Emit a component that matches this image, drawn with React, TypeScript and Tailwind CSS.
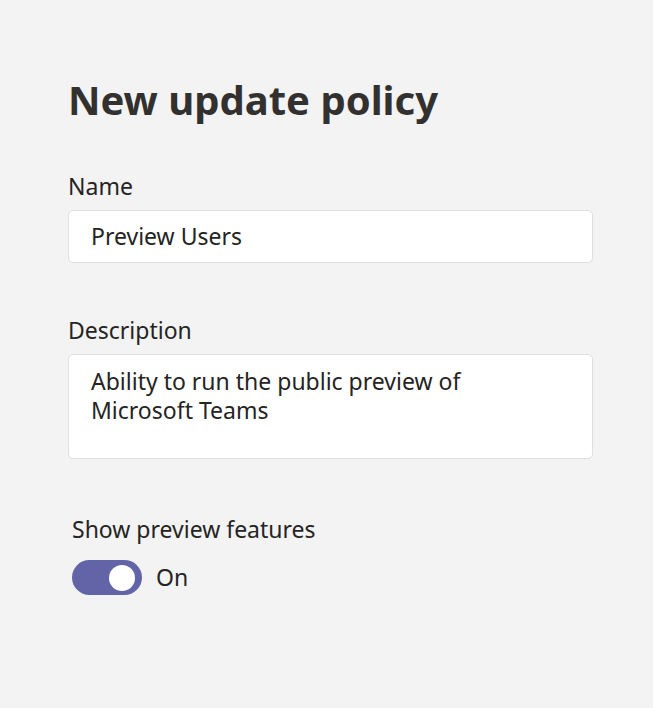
import React from "react";

export default function App() {
  return (
    <div className="min-h-[708px] w-full bg-[#f3f3f3] pl-[68px] pr-[60px] pt-[72px] text-[#252423]" style={{ fontFamily: '"Noto Sans", "Open Sans", sans-serif' }}>
      <h1 className="text-[40px] font-bold leading-[56px] text-[#323130]">New update policy</h1>
      <div className="mt-[44px] text-[23px] leading-[28px]">Name</div>
      <div className="mt-[10px] flex h-[53px] w-[525px] items-center rounded-[5px] border border-[#e1dfdd] bg-white px-[22px] text-[23px]">
        Preview Users
      </div>
      <div className="mt-[53px] text-[23px] leading-[28px]">Description</div>
      <div className="mt-[10px] h-[105px] w-[525px] rounded-[5px] border border-[#e1dfdd] bg-white px-[22px] pt-[12px] text-[23px] leading-[29px]">
        Ability to run the public preview of
        <br />
        Microsoft Teams
      </div>
      <div className="mt-[56px] pl-[4px] text-[23px] leading-[28px]">Show preview features</div>
      <div className="mt-[17px] flex items-center gap-[14px] pl-[4px]">
        <div className="flex h-[35px] w-[70px] items-center justify-end rounded-full bg-[#6264a7] pr-[7px]">
          <div className="h-[26px] w-[26px] rounded-full bg-white" />
        </div>
        <span className="text-[23px]">On</span>
      </div>
    </div>
  );
}
